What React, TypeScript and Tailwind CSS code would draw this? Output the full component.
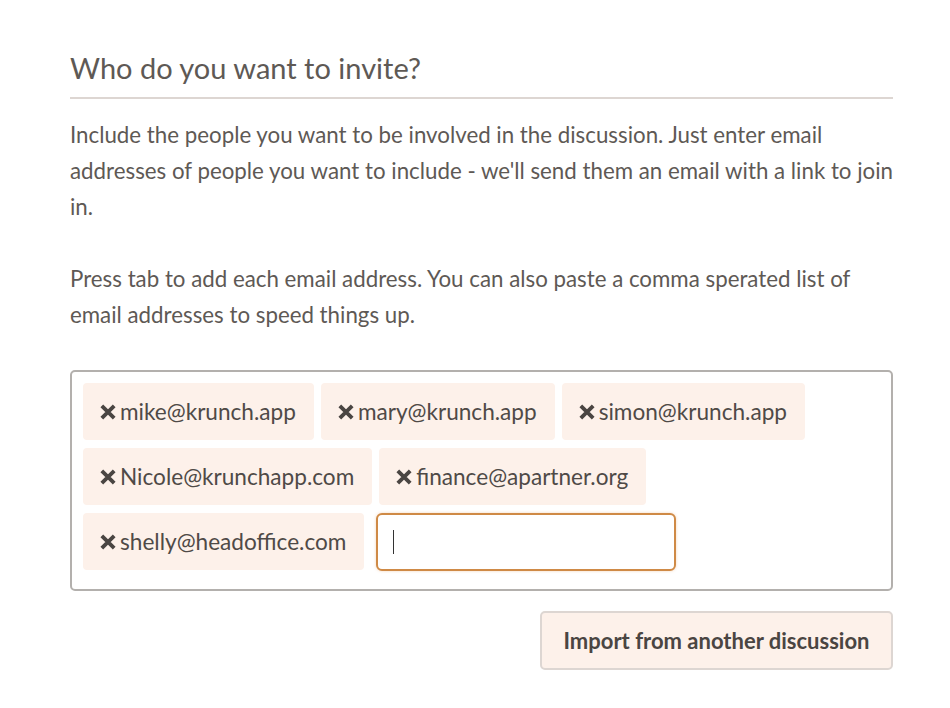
import React from "react";

const tags = [
  "mike@krunch.app",
  "mary@krunch.app",
  "simon@krunch.app",
  "Nicole@krunchapp.com",
  "finance@apartner.org",
  "shelly@headoffice.com",
];

function XIcon() {
  return (
    <svg width="18" height="18" viewBox="0 0 16 16" className="shrink-0">
      <path d="M2.5 2.5 L13.5 13.5 M13.5 2.5 L2.5 13.5" stroke="#4a4542" strokeWidth="3.4" strokeLinecap="butt" />
    </svg>
  );
}

export default function App() {
  return (
    <div className="w-[950px] h-[708px] bg-white overflow-hidden" style={{ fontFamily: "Lato, 'Open Sans', sans-serif" }}>
      <div className="ml-[70px] w-[823px] pt-[48px] text-[#5e5955]">
        <h2 className="text-[29px] leading-[40px] pb-[9px] border-b-2 border-[#ddd6d2]">Who do you want to invite?</h2>
        <p className="mt-[18px] text-[22.3px] leading-[36px]">
          Include the people you want to be involved in the discussion. Just enter email addresses of people you want to include - we'll send them an email with a link to join in.
        </p>
        <p className="mt-[36px] text-[22.3px] leading-[36px]">
          Press tab to add each email address. You can also paste a comma sperated list of email addresses to speed things up.
        </p>
        <div className="mt-[37px] border-2 border-[#b3b0ad] rounded-[5px] pl-[11px] pr-[11px] pt-[11px] pb-[18px] flex flex-wrap gap-x-[7px] gap-y-[8px]">
          {tags.map((t) => (
            <div key={t} className="h-[57px] bg-[#fdf1ea] rounded-[4px] pl-[16px] pr-[18px] flex items-center gap-[3px] text-[22.6px] text-[#4f4a47]">
              <XIcon />
              <span>{t}</span>
            </div>
          ))}
          <div className="ml-[5px] w-[300px] h-[58px] border-2 border-[#cf8a46] rounded-[6px] bg-white flex items-center pl-[15px] shadow-[0_0_3px_rgba(230,150,80,0.4)]">
            <div className="w-[1px] h-[24px] bg-[#333]" />
          </div>
        </div>
        <div className="flex justify-end mt-[20px]">
          <button className="w-[353px] h-[59px] bg-[#fdf1ea] border-2 border-[#ddd6d2] rounded-[5px] text-[22px] font-bold text-[#4a4542]">
            Import from another discussion
          </button>
        </div>
      </div>
    </div>
  );
}
